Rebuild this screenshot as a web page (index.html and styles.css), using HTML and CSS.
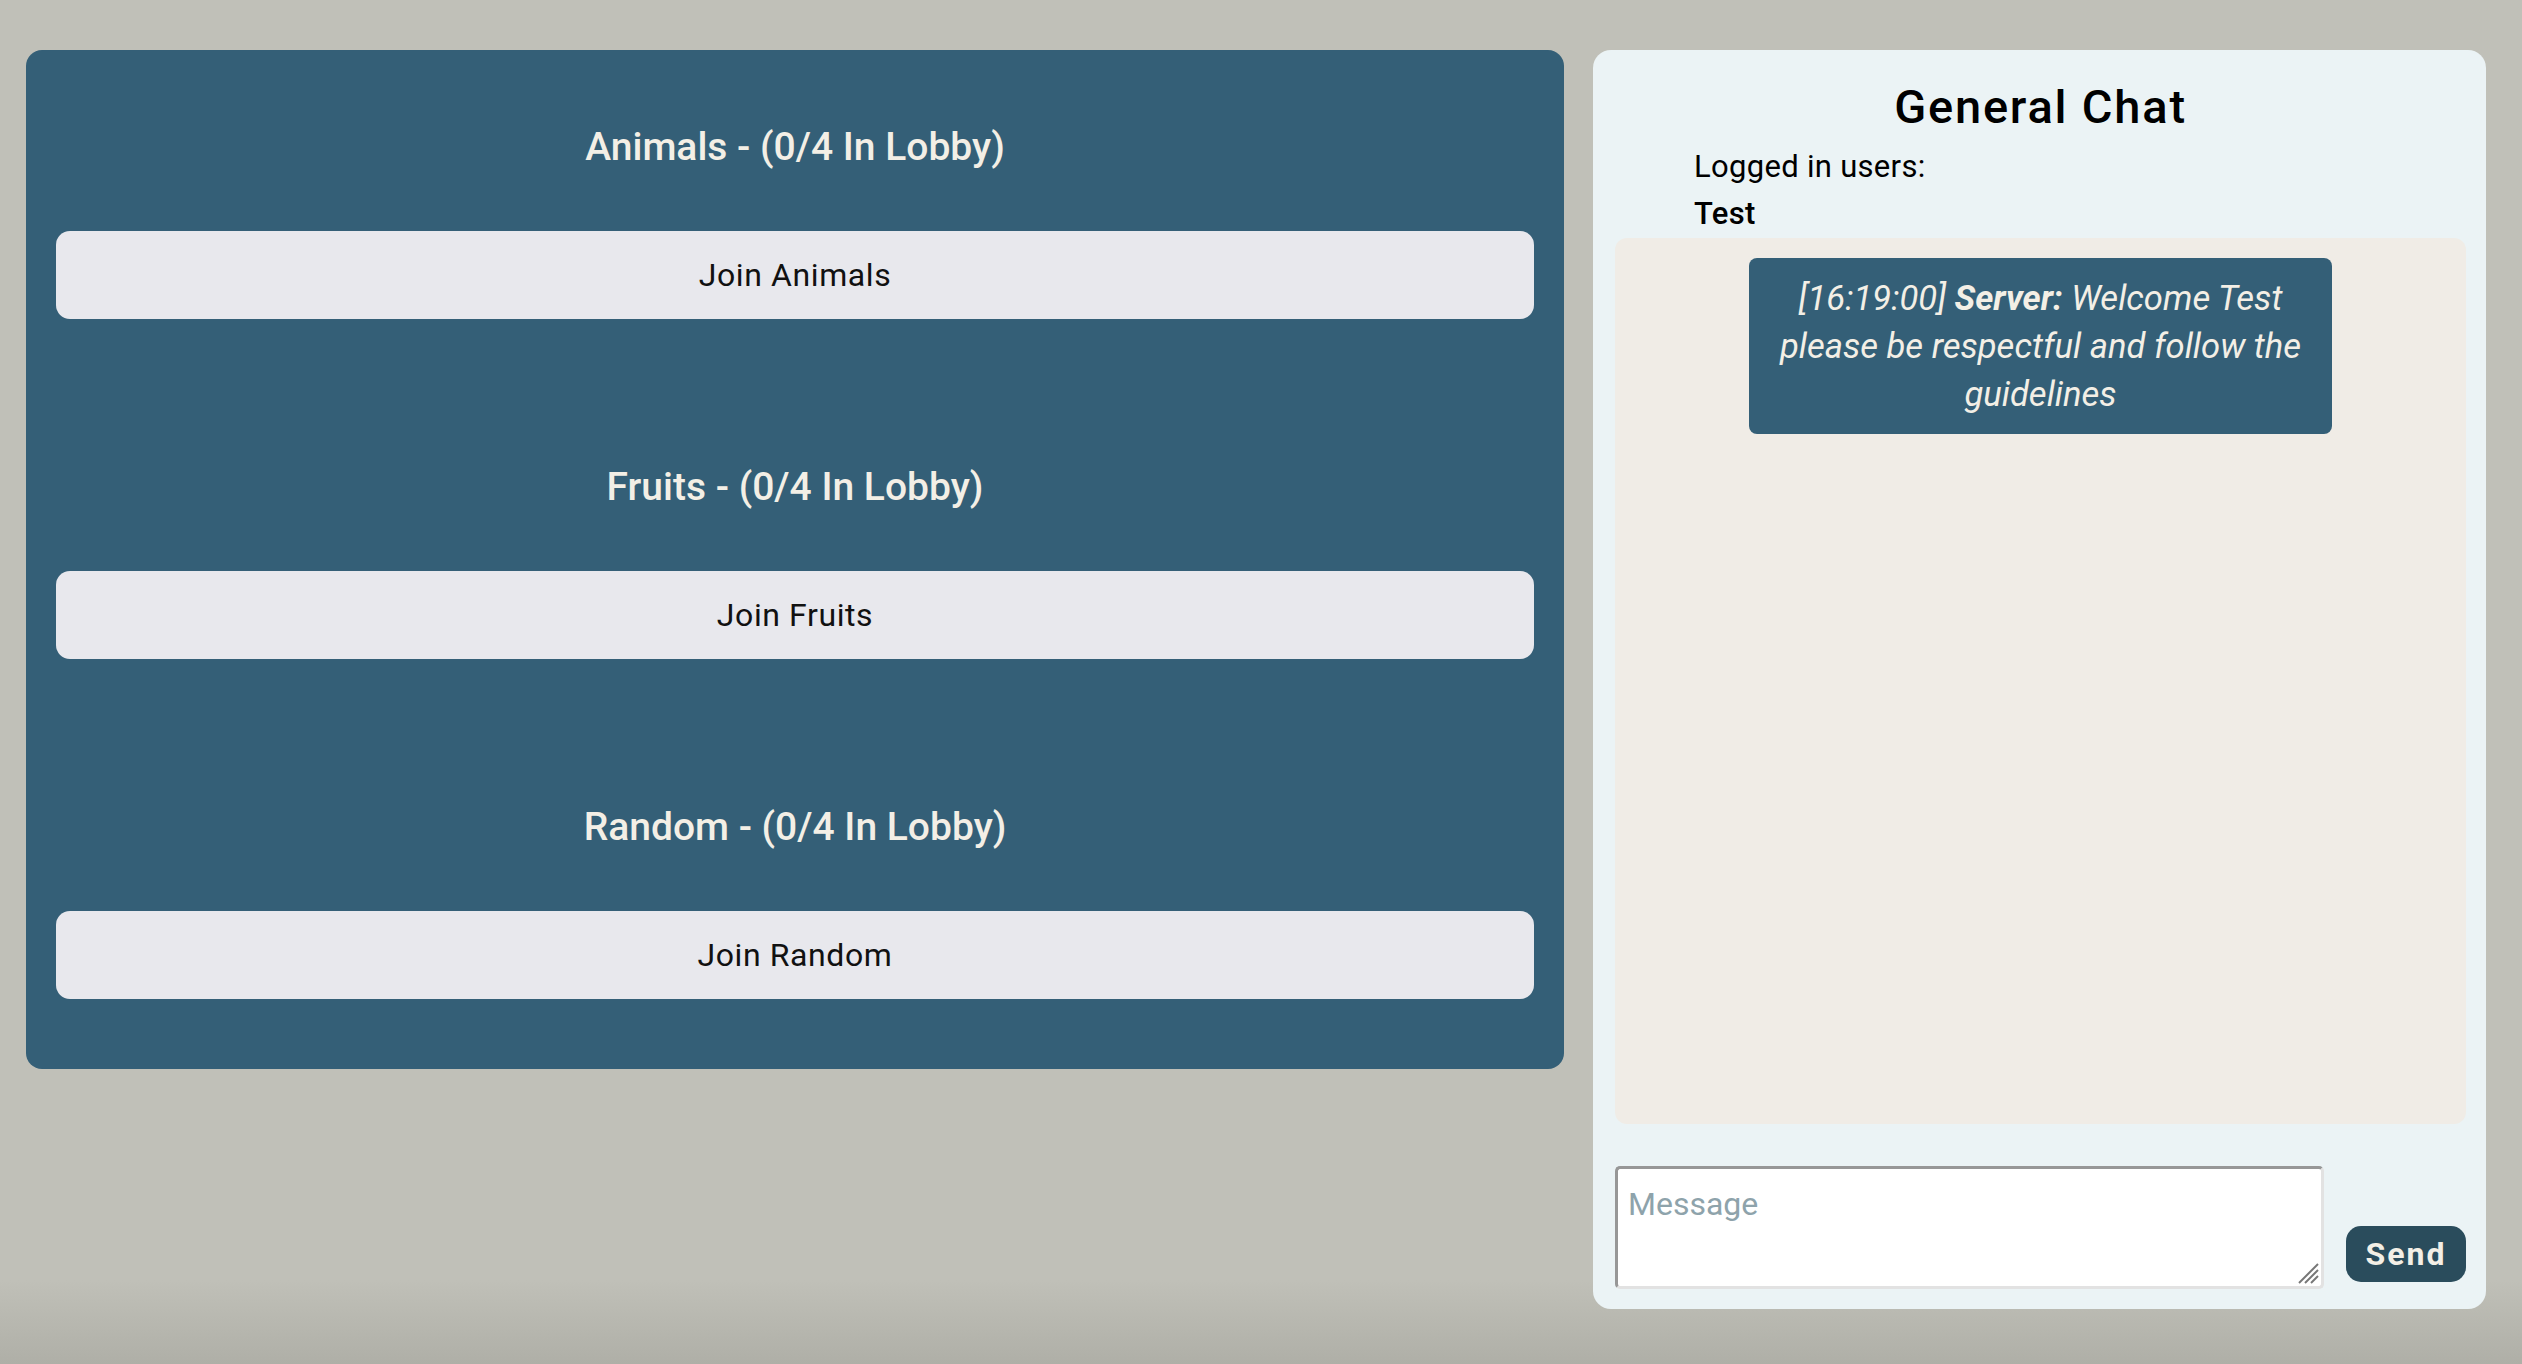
FILE: index.html
```html
<!DOCTYPE html>
<html lang="en">
<head>
<meta charset="utf-8">
<title>Lobbies</title>
<link rel="stylesheet" href="styles.css">
</head>
<body>
<div class="page">
  <section class="lobbies">
    <div class="lobby">
      <h2 class="lobby-title">Animals - (0/4 In Lobby)</h2>
      <button class="join-btn">Join Animals</button>
    </div>
    <div class="lobby">
      <h2 class="lobby-title">Fruits - (0/4 In Lobby)</h2>
      <button class="join-btn">Join Fruits</button>
    </div>
    <div class="lobby">
      <h2 class="lobby-title">Random - (0/4 In Lobby)</h2>
      <button class="join-btn">Join Random</button>
    </div>
  </section>
  <aside class="chat">
    <h1 class="chat-title">General Chat</h1>
    <div class="users">
      <div class="users-label">Logged in users:</div>
      <div class="users-name">Test</div>
    </div>
    <div class="messages">
      <div class="bubble">[16:19:00] <b>Server:</b> Welcome Test please be respectful and follow the guidelines</div>
    </div>
    <div class="composer">
      <div class="input-wrap">
        <textarea class="msg-input" placeholder="Message"></textarea>
        <svg class="resizer" width="22" height="22" viewBox="0 0 22 22" aria-hidden="true">
          <line x1="2" y1="21" x2="21" y2="2" stroke="#777" stroke-width="2"/>
          <line x1="8" y1="21" x2="21" y2="8" stroke="#777" stroke-width="2"/>
          <line x1="14" y1="21" x2="21" y2="14" stroke="#777" stroke-width="2"/>
        </svg>
      </div>
      <button class="send-btn">Send</button>
    </div>
  </aside>
</div>
</body>
</html>
```
FILE: styles.css
```css
html, body {
  margin: 0;
  padding: 0;
}
body {
  height: 1364px;
  overflow: hidden;
  background: linear-gradient(to bottom, #c0c0b8 0, #c0c0b8 1280px, #afafa7 1364px);
  font-family: Roboto, "Liberation Sans", sans-serif;
}
.page {
  display: flex;
  align-items: flex-start;
  gap: 29px;
  padding: 50px 36px 0 26px;
}
.lobbies {
  width: 1538px;
  box-sizing: border-box;
  background: #345f77;
  border-radius: 16px;
  padding: 76px 30px 70px;
  display: flex;
  flex-direction: column;
  gap: 147px;
}
.lobby {
  display: flex;
  flex-direction: column;
}
.lobby-title {
  margin: 0 0 62px;
  font-size: 39px;
  line-height: 43px;
  font-weight: 500;
  text-align: center;
  color: #f3efe6;
}
.join-btn {
  height: 88px;
  border: none;
  border-radius: 14px;
  background: #e8e8ed;
  color: #111;
  font-family: Roboto, "Liberation Sans", sans-serif;
  font-size: 32px;
  letter-spacing: 0.6px;
  padding: 0;
}
.chat {
  width: 893px;
  box-sizing: border-box;
  background: #ebf3f5;
  border-radius: 18px;
  padding: 29px 20px 20px 22px;
  display: flex;
  flex-direction: column;
}
.chat-title {
  margin: 0;
  font-size: 47px;
  line-height: 56px;
  font-weight: 500;
  letter-spacing: 1.8px;
  text-align: center;
  color: #000;
}
.users {
  margin: 14px 0 0 79px;
  font-size: 31px;
  line-height: 35px;
  letter-spacing: 0.3px;
  color: #000;
}
.users-name {
  margin-top: 12px;
  font-weight: 500;
}
.messages {
  margin-top: 7px;
  height: 886px;
  background: #f0ece6;
  border-radius: 12px;
  padding-top: 20px;
  box-sizing: border-box;
  display: flex;
  flex-direction: column;
  align-items: center;
}
.bubble {
  width: 583px;
  box-sizing: border-box;
  padding: 16px 19px;
  background: #345f77;
  border-radius: 8px;
  color: #f3efe6;
  font-size: 34.6px;
  font-style: italic;
  line-height: 48px;
  text-align: center;
}
.bubble b {
  font-weight: 700;
}
.composer {
  margin-top: 42px;
  display: flex;
  align-items: flex-end;
  gap: 22px;
}
.input-wrap {
  flex: 1;
  position: relative;
  display: flex;
}
.msg-input {
  flex: 1;
  height: 123px;
  box-sizing: border-box;
  border-style: solid;
  border-width: 3px;
  border-color: #979797 #e2e2e2 #e2e2e2 #979797;
  border-radius: 5px;
  background: #fff;
  padding: 16px 10px 10px;
  font-family: Roboto, "Liberation Sans", sans-serif;
  font-size: 32px;
  line-height: 38px;
  color: #000;
  outline: none;
  resize: none;
}
.msg-input::placeholder {
  color: #8ea3ab;
}
.resizer {
  position: absolute;
  right: 5px;
  bottom: 5px;
}
.send-btn {
  width: 120px;
  height: 56px;
  margin-bottom: 7px;
  border: none;
  border-radius: 15px;
  background: #2a4c5c;
  color: #f3efe6;
  font-family: Roboto, "Liberation Sans", sans-serif;
  font-size: 32px;
  font-weight: 700;
  letter-spacing: 2px;
  padding: 0;
}
```
